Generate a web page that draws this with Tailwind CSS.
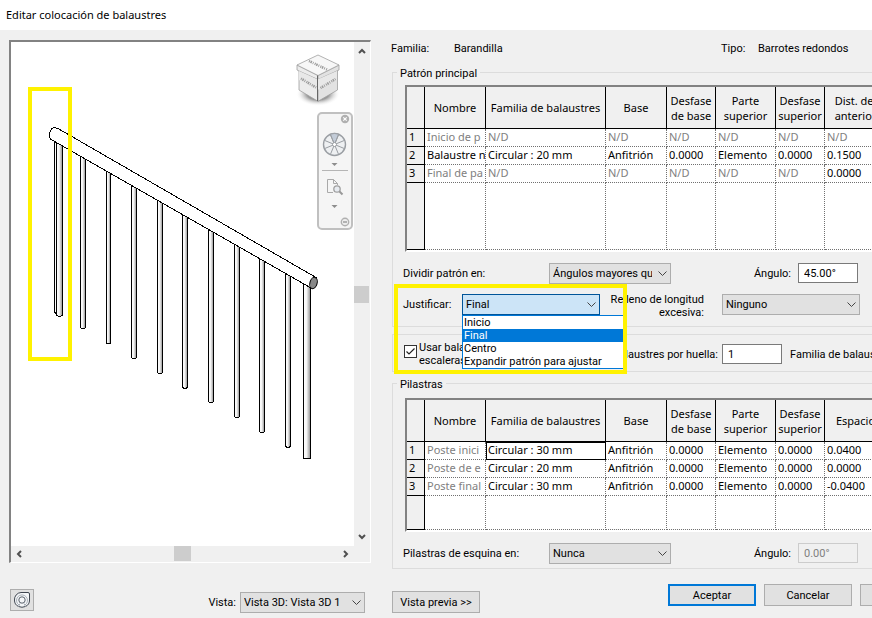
<!DOCTYPE html>
<html lang="es">
<head>
    <meta charset="UTF-8">
    <meta name="viewport" content="width=device-width, initial-scale=1.0">
    <title>Editar colocación de balaustres</title>
    <script src="https://cdn.jsdelivr.net/npm/@tailwindcss/browser@4"></script>
</head>
<body class="min-h-screen overflow-hidden bg-[#f0f0f0] font-[Roboto,sans-serif] text-[11px] leading-[13px] text-black">

    <!-- Title bar -->
    <header class="flex h-[30px] items-center bg-white px-1.5 pb-0.5">
        <h1 class="font-['Noto_Sans',sans-serif] text-[11px]">Editar colocación de balaustres</h1>
    </header>

    <main class="flex pl-[9px]">

        <!-- Preview -->
        <section class="w-[362px] shrink-0 pt-2.5">
            <div class="grid grid-cols-[1fr_16px] grid-rows-[504px_16px] border-t-2 border-l-2 border-r border-b border-t-[#828282] border-l-[#828282] border-r-white border-b-white">
                <svg class="h-full w-full bg-white" viewBox="11 42 343 504" preserveAspectRatio="xMinYMin slice" fill="none">
                    <defs>
                        <linearGradient id="tube">
                            <stop offset="0" stop-color="#fff"/>
                            <stop offset="0.45" stop-color="#f4f4f4"/>
                            <stop offset="1" stop-color="#8c8c8c"/>
                        </linearGradient>
                        <radialGradient id="shadow">
                            <stop offset="0.5" stop-color="#999"/>
                            <stop offset="1" stop-color="#fff" stop-opacity="0"/>
                        </radialGradient>
                    </defs>

                    <!-- Balusters -->
                    <g stroke="#000" fill="url(#tube)" shape-rendering="crispEdges">
                        <path d="M54.500 138V312l3 3h5V138z"/>
                        <path d="M56.500 138V315l2 1.500h2l2-2V138z"/>
                        <path d="M80.500 150V327.500l1 1h3l1-1V150z"/>
                        <path d="M106.500 165V343.500h4V165z"/>
                        <path d="M131.500 180V357.500l1 1h3l1-1V180z"/>
                        <path d="M157.500 195V372.500l1 1h3l1-1V195z"/>
                        <path d="M182.500 210V387.500l2 1h1l2-1V210z"/>
                        <path d="M208.500 225V401.500l1 1h3l1-1V225z"/>
                        <path d="M234.500 240V416.500l1 1h3l1-1V240z"/>
                        <path d="M259.500 254V431.500l1 1h3l1-1V254z"/>
                        <path d="M285.500 268V446.500l2 1h1l2-1V268z"/>
                        <path d="M303.500 280V458.500h7V280z"/>
                    </g>

                    <!-- Handrail -->
                    <path d="M54 127.500L58 128.500L316 277.500L311 288L52 140Q48.500 138 49.500 133.500Q51 128 54 127.500z" fill="#fff" stroke="#000" shape-rendering="crispEdges"/>
                    <ellipse cx="313.500" cy="283" rx="3.600" ry="5.800" fill="#888" stroke="#000" transform="rotate(16 313.500 283)"/>

                    <rect x="30" y="89" width="40" height="270" stroke="#fff200" stroke-width="4"/>

                    <!-- View cube -->
                    <ellipse cx="318" cy="94" rx="22" ry="12" fill="url(#shadow)"/>
                    <g stroke="#a0a0a0" stroke-width="0.800" stroke-linejoin="round">
                        <path d="M299 69L318 78V101.300L299 90z" fill="#ececec"/>
                        <path d="M318 78L337.500 69V90L318 101.300z" fill="#e2e2e2"/>
                        <path d="M297 65L318 75.500V79.500L299 71L297 70z" fill="#ececec"/>
                        <path d="M318 75.500L339 65V70L318 79.500z" fill="#e2e2e2"/>
                        <path d="M318 55L339 65L318 75.500L297 65z" fill="#f7f7f7"/>
                    </g>
                    <path d="M299 71L317.500 79.500L337 71V80L317.500 90L299 80z" fill="#e8e8e8"/>
                    <path d="M317.500 75.500V101" stroke="#666"/>
                    <g stroke="#9a9a9a" stroke-width="2.500" stroke-dasharray="1 0.700 1.500 1 0.800 1.300">
                        <path d="M309 61L327 69.500"/>
                        <path d="M301 78.500L316 87.500"/>
                        <path d="M320.500 88L335.500 79"/>
                    </g>

                    <!-- Navigation bar -->
                    <rect x="318" y="113" width="34" height="116" rx="4" fill="#f5f5f5" stroke="#c0c0c0" stroke-width="2"/>
                    <circle cx="345" cy="119" r="4.200" fill="#b0b0b0"/>
                    <path d="M343.300 117.300l3.400 3.400M346.700 117.300l-3.400 3.400" stroke="#fff" stroke-width="1.200"/>
                    <g stroke="#9a9ea3">
                        <circle cx="334.500" cy="144.500" r="11" fill="#eef0f2" stroke-width="1.400"/>
                        <path d="M334.500 144.500L330.300 134.300A11 11 0 0 1 338.700 134.300z" fill="#c3ccd8"/>
                        <path d="M330.300 134.300L338.700 154.700M338.700 134.300L330.300 154.700M324.300 140.300L344.700 148.700M324.300 148.700L344.700 140.300"/>
                        <circle cx="334.500" cy="144.500" r="2" fill="#fff"/>
                    </g>
                    <path d="M331.500 163h6l-3 3z" fill="#8d8d8d"/>
                    <path d="M322 170.500H348" stroke="#b5b5b5"/>
                    <path d="M333.500 179.500H327.500V192.500H333M333.500 179.500L337.500 183.500V185M333.500 179.500V183.500H337.500" stroke="#a9a9a9"/>
                    <circle cx="337" cy="189" r="3.200" fill="#e7ebf0" stroke="#a0a0a0" stroke-width="1.300"/>
                    <path d="M339.500 191.500L342.500 194.500" stroke="#999" stroke-width="2"/>
                    <path d="M331.500 205h6l-3 3z" fill="#8d8d8d"/>
                    <circle cx="345" cy="222" r="3.700" fill="#eee" stroke="#b0b0b0" stroke-width="1.400"/>
                    <path d="M343 222h4" stroke="#999" stroke-width="1.400"/>
                </svg>

                <!-- Vertical scroll bar -->
                <div class="flex flex-col items-center justify-between py-[5px] pr-px">
                    <svg class="h-2 w-2" viewBox="0 0 8 8" fill="none" stroke="#505050" stroke-width="2"><path d="M1 6L4 3L7 6"/></svg>
                    <div class="h-[17px] w-[15px] bg-[#cdcdcd]"></div>
                    <svg class="h-2 w-2" viewBox="0 0 8 8" fill="none" stroke="#505050" stroke-width="2"><path d="M1 2L4 5L7 2"/></svg>
                </div>

                <!-- Horizontal scroll bar -->
                <div class="flex items-center justify-between px-1 pb-px">
                    <svg class="h-2 w-2" viewBox="0 0 8 8" fill="none" stroke="#505050" stroke-width="2"><path d="M6 1L3 4L6 7"/></svg>
                    <div class="h-[15px] w-[17px] bg-[#cdcdcd]"></div>
                    <svg class="h-2 w-2" viewBox="0 0 8 8" fill="none" stroke="#505050" stroke-width="2"><path d="M2 1L5 4L2 7"/></svg>
                </div>
            </div>

            <div class="mt-[26px] flex items-start pr-1.5">
                <button aria-label="Rueda de navegación" class="ml-px flex h-[22px] w-6 items-center justify-center border border-[#adadad] bg-[#e1e1e1]">
                    <svg class="h-4 w-4" viewBox="0 0 16 16" fill="none" stroke="#3f4650"><path d="M7 .5h7a1.500 1.500 0 0 1 1.500 1.500V8a7 7 0 0 1-4 6.500q-3.500 1.500-7 0A7 7 0 0 1 .5 8A7 7 0 0 1 7 .5z" fill="#f4f6f8"/><path d="M5 13A5.500 5.500 0 1 1 11 13M4.500 14.500L6 11.500M11.500 14.500L10 11.500" stroke="#a9b0b8"/><circle cx="8" cy="8" r="3.200" stroke="#5a626c"/></svg>
                </button>
                <label for="vista" class="mt-[7px] ml-auto">Vista:</label>
                <div class="relative mt-[3px] ml-1 w-[125px]">
                    <select id="vista" class="h-[21px] w-full appearance-none border border-[#adadad] bg-[#e1e1e1] pl-[3px]"><option>Vista 3D: Vista 3D 1</option></select>
                    <svg class="pointer-events-none absolute top-[7px] right-1 h-[7px] w-[9px]" viewBox="0 0 9 7" fill="none" stroke="#444"><path d="M.5 1.500L4.500 5.500L8.500 1.500"/></svg>
                </div>
            </div>
        </section>

        <!-- Settings -->
        <section class="ml-5 min-w-0 flex-1 pt-[11px]">
            <div class="flex h-[15px] items-center whitespace-nowrap">
                <span class="w-[63px]">Familia:</span>
                <span class="w-[267px]">Barandilla</span>
                <span class="w-[37px]">Tipo:</span>
                <span>Barrotes redondos</span>
            </div>

            <!-- Main pattern -->
            <fieldset class="mt-[9px] ml-px min-w-0 border border-r-0 border-[#dcdcdc]">
                <legend class="ml-1 px-[3px] pt-0.5">Patrón principal</legend>
                <div class="mt-[5px] ml-3 overflow-hidden border-t-2 border-l-2 border-b-2 border-t-[#828282] border-l-[#828282] border-b-white font-['Noto_Sans',sans-serif]">
                    <table class="w-[480px] table-fixed border-separate border-spacing-0 bg-white whitespace-nowrap">
                        <colgroup><col class="w-[18px]"><col class="w-[61px]"><col class="w-[120px]"><col class="w-[61px]"><col class="w-[49px]"><col class="w-[60px]"><col class="w-[49px]"><col class="w-[62px]"></colgroup>
                        <thead>
                            <tr class="h-[42px] bg-[#f0f0f0] leading-[15px] *:border-r *:border-b *:border-black *:p-0 *:font-normal">
                                <th></th><th>Nombre</th><th>Familia de balaustres</th><th>Base</th><th>Desfase<br>de base</th><th>Parte<br>superior</th><th>Desfase<br>superior</th><th>Dist. del<br>anterior</th>
                            </tr>
                        </thead>
                        <tbody class="[&_td]:overflow-hidden [&_td]:border-r [&_td]:border-b [&_td]:border-dotted [&_td]:border-[#707070] [&_td]:pt-0 [&_td]:pb-0.5 [&_td]:pl-0.5 [&_th]:border-r [&_th]:border-b [&_th]:border-black [&_th]:bg-[#f0f0f0] [&_th]:pt-0 [&_th]:pb-0.5 [&_th]:pl-0.5 [&_th]:text-left [&_th]:font-normal">
                            <tr class="h-[18px] text-[#808080]"><th class="text-black">1</th><td>Inicio de p</td><td>N/D</td><td>N/D</td><td>N/D</td><td>N/D</td><td>N/D</td><td>N/D</td></tr>
                            <tr class="h-[18px]"><th>2</th><td>Balaustre n</td><td>Circular : 20 mm</td><td>Anfitrión</td><td>0.0000</td><td>Elemento</td><td>0.0000</td><td>0.1500</td></tr>
                            <tr class="h-[18px] text-[#808080]"><th class="text-black">3</th><td>Final de pa</td><td>N/D</td><td>N/D</td><td>N/D</td><td>N/D</td><td>N/D</td><td class="text-black">0.0000</td></tr>
                            <tr class="h-[67px]"><th></th><td></td><td></td><td></td><td></td><td></td><td></td><td></td></tr>
                        </tbody>
                    </table>
                </div>

                <div class="mt-[11px] ml-2.5 flex items-start whitespace-nowrap">
                    <label for="dividir" class="mt-1 w-[146px]">Dividir patrón en:</label>
                    <div class="relative w-[122px]">
                        <select id="dividir" class="h-[21px] w-full appearance-none overflow-hidden border border-[#adadad] bg-[#e1e1e1] pr-[18px] pl-[3px]"><option>Ángulos mayores que</option></select>
                        <svg class="pointer-events-none absolute top-[7px] right-1 h-[7px] w-[9px]" viewBox="0 0 9 7" fill="none" stroke="#444"><path d="M.5 1.500L4.500 5.500L8.500 1.500"/></svg>
                    </div>
                    <label for="angulo" class="mt-1 w-[120px] text-right">Ángulo:</label>
                    <input id="angulo" type="text" value="45.00°" class="ml-[7px] h-5 w-[60px] border border-[#7a7a7a] bg-white px-[5px]">
                </div>

                <div class="relative mt-2.5 mb-[11px] ml-2.5 flex h-[21px] items-start whitespace-nowrap">
                    <label for="justificar" class="mt-1 w-[59px]">Justificar:</label>
                    <div class="relative w-[138px]">
                        <select id="justificar" class="h-[21px] w-full appearance-none border border-[#005499] bg-[#cce4f7] pl-[3px]"><option>Inicio</option><option selected>Final</option><option>Centro</option><option>Expandir patrón para ajustar</option></select>
                        <svg class="pointer-events-none absolute top-[7px] right-1 h-[7px] w-[9px]" viewBox="0 0 9 7" fill="none" stroke="#444"><path d="M.5 1.500L4.500 5.500L8.500 1.500"/></svg>
                        <!-- Open list -->
                        <ul role="listbox" class="absolute top-[21px] left-0 z-10 w-[163px] border border-[#0078d7] bg-white *:px-px">
                            <li role="option">Inicio</li>
                            <li role="option" aria-selected="true" class="bg-[#0078d7] text-white">Final</li>
                            <li role="option">Centro</li>
                            <li role="option">Expandir patrón para ajustar</li>
                        </ul>
                    </div>
                    <label for="relleno" class="-mt-px w-[104px] text-right">Relleno de longitud<br>excesiva:</label>
                    <div class="relative ml-[18px] w-[138px]">
                        <select id="relleno" class="h-[21px] w-full appearance-none border border-[#adadad] bg-[#e1e1e1] pl-[3px]"><option>Ninguno</option></select>
                        <svg class="pointer-events-none absolute top-[7px] right-1 h-[7px] w-[9px]" viewBox="0 0 9 7" fill="none" stroke="#444"><path d="M.5 1.500L4.500 5.500L8.500 1.500"/></svg>
                    </div>
                    <!-- Highlight -->
                    <div class="pointer-events-none absolute -top-2.5 -left-[9px] z-20 h-[90px] w-[233px] border-4 border-[#fff200]"></div>
                </div>
            </fieldset>

            <!-- Treads -->
            <fieldset class="mt-[7px] ml-px min-w-0 overflow-hidden border border-r-0 border-[#dcdcdc] pt-[9px] pb-[7px] pl-[11px]">
                <div class="flex h-5 items-center whitespace-nowrap">
                    <input id="usar" type="checkbox" checked class="mt-px h-[13px] w-[13px] shrink-0 appearance-none self-start border border-[#333] bg-white">
                    <svg class="pointer-events-none mt-px -ml-[13px] h-[13px] w-[13px] shrink-0 self-start" viewBox="0 0 13 13" fill="none" stroke="#222" stroke-width="1.200"><path d="M2.500 6.500L5 9L10.500 3.500"/></svg>
                    <label for="usar" class="ml-0.5 w-[180px] shrink-0">Usar balaustre por huella en<br>escaleras</label>
                    <label for="huella" class="w-[119px] shrink-0 text-right">Balaustres por huella:</label>
                    <input id="huella" type="text" value="1" class="ml-1 h-5 w-[60px] shrink-0 border border-[#7a7a7a] bg-white px-[5px]">
                    <span class="ml-2">Familia de balaustres:</span>
                </div>
            </fieldset>

            <!-- Posts -->
            <fieldset class="mt-1 ml-px min-w-0 border border-r-0 border-[#dcdcdc]">
                <legend class="ml-1 px-[3px] pt-0.5">Pilastras</legend>
                <div class="mt-[7px] ml-3 overflow-hidden border-t-2 border-l-2 border-b-2 border-t-[#828282] border-l-[#828282] border-b-white font-['Noto_Sans',sans-serif]">
                    <table class="w-[480px] table-fixed border-separate border-spacing-0 bg-white whitespace-nowrap">
                        <colgroup><col class="w-[18px]"><col class="w-[61px]"><col class="w-[120px]"><col class="w-[61px]"><col class="w-[49px]"><col class="w-[60px]"><col class="w-[49px]"><col class="w-[62px]"></colgroup>
                        <thead>
                            <tr class="h-[42px] bg-[#f0f0f0] leading-[15px] *:border-r *:border-b *:border-black *:p-0 *:font-normal">
                                <th></th><th>Nombre</th><th>Familia de balaustres</th><th>Base</th><th>Desfase<br>de base</th><th>Parte<br>superior</th><th>Desfase<br>superior</th><th>Espacio</th>
                            </tr>
                        </thead>
                        <tbody class="[&_td]:overflow-hidden [&_td]:border-r [&_td]:border-b [&_td]:border-dotted [&_td]:border-[#707070] [&_td]:pt-0 [&_td]:pb-0.5 [&_td]:pl-0.5 [&_th]:border-r [&_th]:border-b [&_th]:border-black [&_th]:bg-[#f0f0f0] [&_th]:pt-0 [&_th]:pb-0.5 [&_th]:pl-0.5 [&_th]:text-left [&_th]:font-normal">
                            <tr class="h-[18px]"><th>1</th><td class="text-[#808080]">Poste inici</td><td class="outline outline-black -outline-offset-1">Circular : 30 mm</td><td>Anfitrión</td><td>0.0000</td><td>Elemento</td><td>0.0000</td><td>0.0400</td></tr>
                            <tr class="h-[18px]"><th>2</th><td class="text-[#808080]">Poste de e</td><td>Circular : 20 mm</td><td>Anfitrión</td><td>0.0000</td><td>Elemento</td><td>0.0000</td><td>0.0000</td></tr>
                            <tr class="h-[18px]"><th>3</th><td class="text-[#808080]">Poste final</td><td>Circular : 30 mm</td><td>Anfitrión</td><td>0.0000</td><td>Elemento</td><td>0.0000</td><td>-0.0400</td></tr>
                            <tr class="h-[34px]"><th></th><td></td><td></td><td></td><td></td><td></td><td></td><td></td></tr>
                        </tbody>
                    </table>
                </div>

                <div class="mt-[11px] mb-1 ml-2.5 flex items-start whitespace-nowrap">
                    <label for="esquina" class="mt-1 w-[146px]">Pilastras de esquina en:</label>
                    <div class="relative w-[122px]">
                        <select id="esquina" class="h-[21px] w-full appearance-none border border-[#adadad] bg-[#e1e1e1] pl-[3px]"><option>Nunca</option></select>
                        <svg class="pointer-events-none absolute top-[7px] right-1 h-[7px] w-[9px]" viewBox="0 0 9 7" fill="none" stroke="#444"><path d="M.5 1.500L4.500 5.500L8.500 1.500"/></svg>
                    </div>
                    <label for="angulo2" class="mt-1 w-[120px] text-right">Ángulo:</label>
                    <input id="angulo2" type="text" value="0.00°" disabled class="ml-[7px] h-5 w-[60px] border border-[#cccccc] bg-[#f0f0f0] px-[5px] text-[#808080]">
                </div>
            </fieldset>

            <div class="mt-[15px] flex items-start gap-2 overflow-hidden whitespace-nowrap">
                <button class="mt-[7px] mr-[180px] ml-px h-[22px] w-[88px] shrink-0 border border-[#adadad] bg-[#e1e1e1]">Vista previa &gt;&gt;</button>
                <button class="h-[22px] w-[88px] shrink-0 border-2 border-[#0078d7] bg-[#e1e1e1]">Aceptar</button>
                <button class="h-[22px] w-[88px] shrink-0 border border-[#adadad] bg-[#e1e1e1]">Cancelar</button>
                <button class="h-[22px] w-[88px] shrink-0 border border-[#adadad] bg-[#e1e1e1]">Aplicar</button>
            </div>
        </section>
    </main>

</body>
</html>
